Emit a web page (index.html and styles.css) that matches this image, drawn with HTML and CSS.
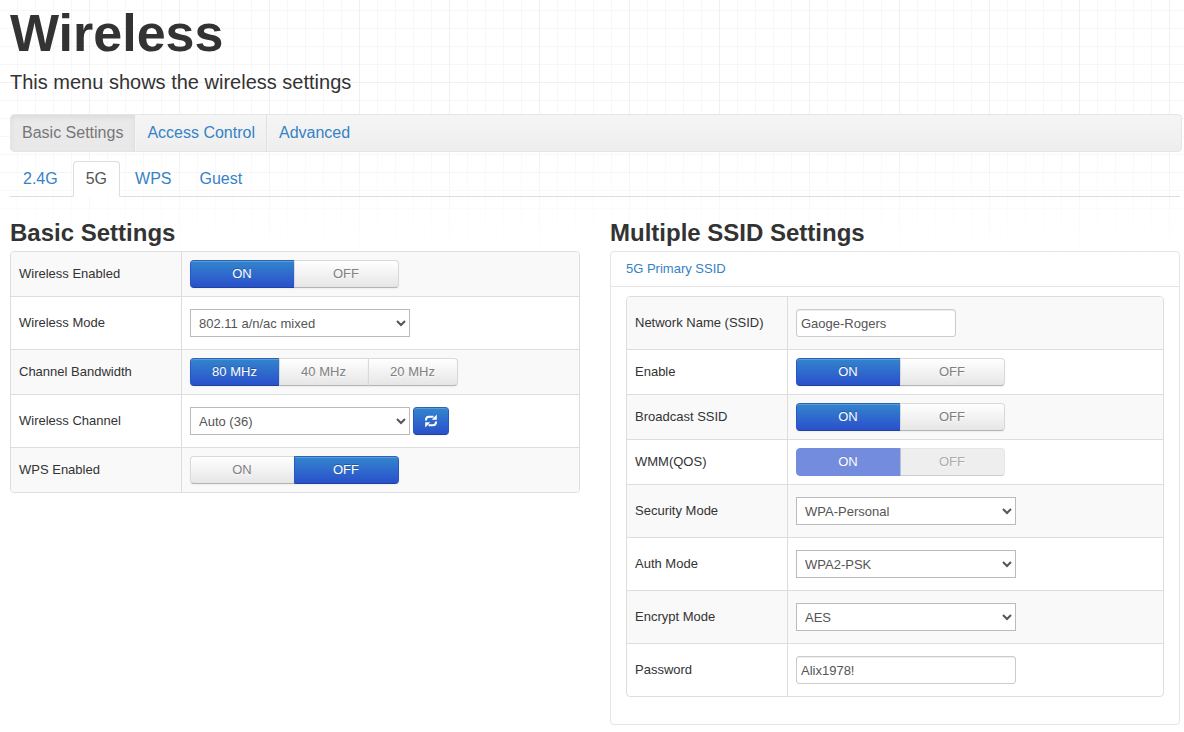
FILE: index.html
```html
<!DOCTYPE html>
<html lang="en">
<head>
<meta charset="utf-8">
<title>Wireless</title>
<link rel="stylesheet" href="styles.css">
</head>
<body>
<header class="page-header">
  <h1 class="page-title">Wireless</h1>
  <p class="lead">This menu shows the wireless settings</p>
</header>

<nav class="subnav" aria-label="Wireless sections">
  <a class="subnav-link is-active" href="#basic">Basic Settings</a>
  <a class="subnav-link" href="#access">Access Control</a>
  <a class="subnav-link" href="#advanced">Advanced</a>
</nav>

<nav class="tabs" aria-label="Radio">
  <a class="tab" href="#g24">2.4G</a>
  <a class="tab is-active" href="#g5">5G</a>
  <a class="tab" href="#wps">WPS</a>
  <a class="tab" href="#guest">Guest</a>
</nav>

<main class="columns">
  <section>
    <h2 class="section-title">Basic Settings</h2>
    <table class="settings">
      <tr>
        <th scope="row" id="l-enabled">Wireless Enabled</th>
        <td><div class="btn-group" role="group" aria-labelledby="l-enabled"><button type="button" class="btn btn-wide btn-on" aria-pressed="true">ON</button><button type="button" class="btn btn-wide" aria-pressed="false">OFF</button></div></td>
      </tr>
      <tr>
        <th scope="row"><label for="mode">Wireless Mode</label></th>
        <td><div class="field"><select class="select" id="mode"><option>802.11 a/n/ac mixed</option></select></div></td>
      </tr>
      <tr>
        <th scope="row" id="l-bandwidth">Channel Bandwidth</th>
        <td><div class="btn-group" role="group" aria-labelledby="l-bandwidth"><button type="button" class="btn btn-on" aria-pressed="true">80 MHz</button><button type="button" class="btn" aria-pressed="false">40 MHz</button><button type="button" class="btn" aria-pressed="false">20 MHz</button></div></td>
      </tr>
      <tr>
        <th scope="row"><label for="channel">Wireless Channel</label></th>
        <td><div class="field"><select class="select" id="channel"><option>Auto (36)</option></select><button type="button" class="btn btn-on btn-icon" aria-label="Refresh channel"><svg width="14" height="14" viewBox="0 0 14 14" aria-hidden="true"><path d="M2 6.500V6q0-3.200 3.200-3.200h4.300M12 7.500V8q0 3.200-3.200 3.200H4.500" fill="none" stroke="currentColor" stroke-width="2"/><path d="M12.800.500v5.300H7.800zM1.200 13.500V8.200h5z" fill="currentColor"/></svg></button></div></td>
      </tr>
      <tr>
        <th scope="row" id="l-wps">WPS Enabled</th>
        <td><div class="btn-group" role="group" aria-labelledby="l-wps"><button type="button" class="btn btn-wide" aria-pressed="false">ON</button><button type="button" class="btn btn-wide btn-on" aria-pressed="true">OFF</button></div></td>
      </tr>
    </table>
  </section>

  <section>
    <h2 class="section-title">Multiple SSID Settings</h2>
    <div class="panel">
      <div class="panel-head"><a class="panel-link" href="#ssid">5G Primary SSID</a></div>
      <div class="panel-body" id="ssid">
        <table class="settings settings-nested">
          <tr>
            <th scope="row"><label for="name">Network Name (SSID)</label></th>
            <td><div class="field"><input class="text text-short" id="name" type="text" value="Gaoge-Rogers"></div></td>
          </tr>
          <tr>
            <th scope="row" id="l-enable">Enable</th>
            <td><div class="btn-group" role="group" aria-labelledby="l-enable"><button type="button" class="btn btn-wide btn-on" aria-pressed="true">ON</button><button type="button" class="btn btn-wide" aria-pressed="false">OFF</button></div></td>
          </tr>
          <tr>
            <th scope="row" id="l-broadcast">Broadcast SSID</th>
            <td><div class="btn-group" role="group" aria-labelledby="l-broadcast"><button type="button" class="btn btn-wide btn-on" aria-pressed="true">ON</button><button type="button" class="btn btn-wide" aria-pressed="false">OFF</button></div></td>
          </tr>
          <tr>
            <th scope="row" id="l-wmm">WMM(QOS)</th>
            <td><div class="btn-group" role="group" aria-labelledby="l-wmm"><button type="button" class="btn btn-wide btn-on" aria-pressed="true" disabled>ON</button><button type="button" class="btn btn-wide" aria-pressed="false" disabled>OFF</button></div></td>
          </tr>
          <tr>
            <th scope="row"><label for="security">Security Mode</label></th>
            <td><div class="field"><select class="select" id="security"><option>WPA-Personal</option></select></div></td>
          </tr>
          <tr>
            <th scope="row"><label for="auth">Auth Mode</label></th>
            <td><div class="field"><select class="select" id="auth"><option>WPA2-PSK</option></select></div></td>
          </tr>
          <tr>
            <th scope="row"><label for="encrypt">Encrypt Mode</label></th>
            <td><div class="field"><select class="select" id="encrypt"><option>AES</option></select></div></td>
          </tr>
          <tr>
            <th scope="row"><label for="password">Password</label></th>
            <td><div class="field"><input class="text" id="password" type="text" value="Alix1978!"></div></td>
          </tr>
        </table>
      </div>
    </div>
  </section>
</main>
</body>
</html>
```

FILE: styles.css
```css
* { box-sizing: border-box; }

body {
  margin: 0;
  padding: 2px 4px 7px 10px;
  font: 13px/18px "Liberation Sans", Arial, sans-serif;
  color: #333;
  background-color: #fff;
  background-image:
    linear-gradient(rgba(255, 255, 255, 0) 130px, #fff 260px),
    linear-gradient(90deg, #f0f0f0 1px, transparent 1px),
    linear-gradient(#f0f0f0 1px, transparent 1px),
    linear-gradient(90deg, #f7f7f7 1px, transparent 1px),
    linear-gradient(#f7f7f7 1px, transparent 1px);
  background-size: auto, 90px 90px, 90px 90px, 18px 18px, 18px 18px;
  background-position: 0 0, 89px 0, 0 82px, 17px 0, 0 10px;
}

a { color: #3582c6; text-decoration: none; }

.page-title { margin: 0; font-size: 52px; line-height: 62px; }
.lead { margin: 4px 0 18px; font-size: 20px; line-height: 28px; }

.subnav {
  display: flex;
  height: 38px;
  margin-right: -2px;
  border: 1px solid #e5e5e5;
  border-radius: 4px;
  background: linear-gradient(#f5f5f5, #eee);
  font-size: 16px;
}
.subnav-link {
  padding: 9px 11px;
  border-left: 1px solid #f5f5f5;
  border-right: 1px solid #e0e0e0;
}
.subnav-link:first-child { border-left: 0; border-radius: 3px 0 0 3px; }
.subnav-link:last-child { border-right: 0; }
.subnav-link.is-active {
  color: #777;
  background: #e9e9e9;
  box-shadow: inset 0 3px 5px rgba(0, 0, 0, 0.05);
}

.tabs {
  display: flex;
  gap: 2px;
  margin-top: 9px;
  border-bottom: 1px solid #ddd;
  font-size: 16px;
}
.tab {
  margin-bottom: -1px;
  padding: 8px 12px;
  border: 1px solid transparent;
  border-radius: 4px 4px 0 0;
}
.tab.is-active {
  color: #555;
  background: #fff;
  border-color: #ddd #ddd #fff;
}

.columns {
  display: grid;
  grid-template-columns: 1fr 1fr;
  gap: 30px;
  align-items: start;
  margin-top: 18px;
}
.section-title { margin: 0; font-size: 24px; line-height: 36px; }

.settings {
  width: 100%;
  table-layout: fixed;
  border: 1px solid #ddd;
  border-radius: 4px;
  border-spacing: 0;
  background: #fff;
  overflow: hidden;
}
.settings th, .settings td {
  padding: 8px;
  border-top: 1px solid #ddd;
  text-align: left;
  font-weight: normal;
  vertical-align: middle;
}
.settings th { width: 170px; }
.settings-nested th { width: 160px; }
.settings td { border-left: 1px solid #ddd; }
.settings tr:first-child > * { border-top: 0; }
.settings tr:nth-child(odd) > * { background: #f9f9f9; }

.panel { border: 1px solid #e5e5e5; border-radius: 4px; }
.panel-head { padding: 8px 15px; }
.panel-link { display: block; }
.panel-body { padding: 9px 15px 27px; border-top: 1px solid #e5e5e5; }

.field { display: flex; gap: 3px; padding: 4px 0; }

.select, .text {
  width: 220px;
  height: 28px;
  font: inherit;
  color: #555;
  background: #fff;
}
.select { padding: 4px; border: 1px solid #bbb; border-radius: 0; }
.text {
  padding: 4px;
  border: 1px solid #ccc;
  border-radius: 3px;
  box-shadow: inset 0 1px 1px rgba(0, 0, 0, 0.075);
}
.text-short { width: 160px; }

.btn-group { display: flex; }
.btn {
  width: 90px;
  height: 28px;
  padding: 0 1px 1px 0;
  border: 1px solid #d9d9d9;
  border-bottom-color: #b3b3b3;
  border-radius: 4px;
  font: inherit;
  color: #808080;
  text-shadow: 0 1px 1px rgba(255, 255, 255, 0.75);
  background: linear-gradient(#fff, #e6e6e6);
  box-shadow: inset 0 1px 0 rgba(255, 255, 255, 0.2), 0 1px 2px rgba(0, 0, 0, 0.05);
}
.btn-wide { width: 105px; }
.btn-group .btn { border-radius: 0; }
.btn-group .btn + .btn { margin-left: -1px; }
.btn-group .btn:first-child { border-radius: 4px 0 0 4px; }
.btn-group .btn:last-child { border-radius: 0 4px 4px 0; }
.btn-on {
  color: #fff;
  text-shadow: 0 -1px 0 rgba(0, 0, 0, 0.25);
  border-color: #2a62b8 #2a55c4 #1f4496;
  background: linear-gradient(#3385cc, #2a50cc);
}
.btn-icon { display: grid; place-items: center; width: 36px; }
.btn:disabled { opacity: 0.65; background: #e6e6e6; box-shadow: none; }
.btn-on:disabled { background: #2a50cc; border-color: #2a50cc; }
```
